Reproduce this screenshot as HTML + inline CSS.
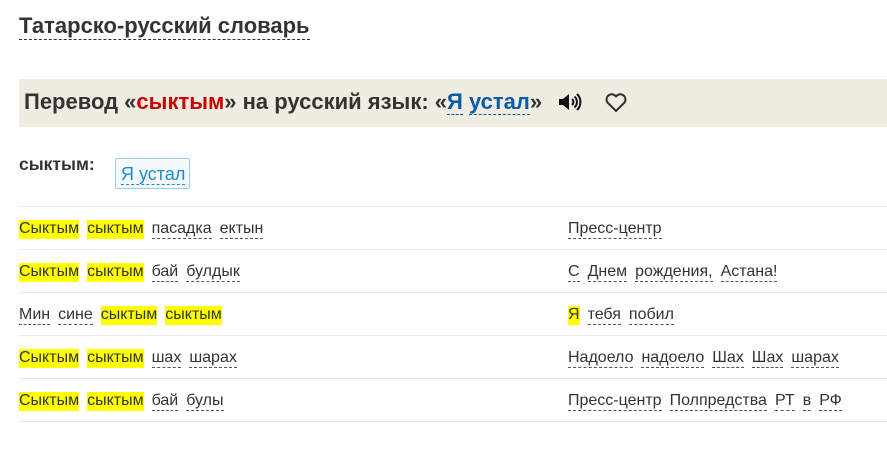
<!DOCTYPE html>
<html><head><meta charset="utf-8"><style>
*{margin:0;padding:0;box-sizing:border-box}
body{width:887px;height:471px;background:#fff;font-family:"Liberation Sans",Arial,sans-serif;color:#333;position:relative;overflow:hidden}
.t{position:absolute;left:19px;top:13px;font-size:22px;font-weight:bold;color:#333;border-bottom:1px dashed #333;line-height:26px}
.band{position:absolute;left:19px;top:79px;width:868px;height:48px;background:#efede2}
.h{position:absolute;left:5px;top:11px;font-size:22px;font-weight:bold;color:#333;white-space:nowrap;line-height:24px}
.h .r{color:#c00}
.h .b{color:#0a5ca8;border-bottom:1px dashed #0a5ca8}
.w{position:absolute;left:19px;top:154px;font-size:17.5px;font-weight:bold;color:#333}
.chip{position:absolute;left:115px;top:158px;width:75px;height:31px;border:1px solid #9ccbe6;background:#f3f9fd;border-radius:2px;padding:5px 0 0 5px;font-size:18px;color:#1d8ad0;line-height:20px}
.chip span{border-bottom:1px dashed #1d8ad0}
.row{position:absolute;left:19px;width:868px;height:43px;border-top:1px solid #eceae2;font-size:16px;line-height:20px}
.row .l,.row .rr{position:absolute;top:12px;white-space:nowrap}
.row .l{left:0}.row .rr{left:549px}
.row span{display:inline-block;margin-right:8px;border-bottom:1px dashed #555;line-height:18px}
.row span.y{background:#ff0;border-bottom:1px solid transparent}
.last{position:absolute;left:19px;top:421px;width:868px;border-top:1px solid #eceae2}
</style></head><body>
<div class="t">Татарско-русский словарь</div>
<div class="band"><div class="h">Перевод «<span class="r">сыктым</span>» на русский язык: «<span class="b">Я</span> <span class="b">устал</span>»</div>
<svg style="position:absolute;left:538px;top:12px" width="26" height="22" viewBox="0 0 26 22"><path d="M2 8h4l6-5v16l-6-5H2z" fill="#111"/><path d="M15 8a4 4 0 0 1 0 6M17.5 5.5a7.5 7.5 0 0 1 0 11M20 3a11 11 0 0 1 0 16" stroke="#111" stroke-width="2" fill="none"/></svg>
<svg style="position:absolute;left:585px;top:14px" width="24" height="20" viewBox="0 0 24 20"><path d="M12 18L3.5 9.5A5 5 0 0 1 12 3.5A5 5 0 0 1 20.5 9.5Z" stroke="#333" stroke-width="2" fill="none" stroke-linejoin="round"/></svg>
</div>
<div class="w">сыктым:</div>
<div class="chip"><span>Я устал</span></div>
<div class="row" style="top:206px"><div class="l"><span class="y">Сыктым</span><span class="y">сыктым</span><span>пасадка</span><span>ектын</span></div><div class="rr"><span>Пресс-центр</span></div></div>
<div class="row" style="top:249px"><div class="l"><span class="y">Сыктым</span><span class="y">сыктым</span><span>бай</span><span>булдык</span></div><div class="rr"><span>С</span><span>Днем</span><span>рождения,</span><span>Астана!</span></div></div>
<div class="row" style="top:292px"><div class="l"><span>Мин</span><span>сине</span><span class="y">сыктым</span><span class="y">сыктым</span></div><div class="rr"><span class="y">Я</span><span>тебя</span><span>побил</span></div></div>
<div class="row" style="top:335px"><div class="l"><span class="y">Сыктым</span><span class="y">сыктым</span><span>шах</span><span>шарах</span></div><div class="rr"><span>Надоело</span><span>надоело</span><span>Шах</span><span>Шах</span><span>шарах</span></div></div>
<div class="row" style="top:378px"><div class="l"><span class="y">Сыктым</span><span class="y">сыктым</span><span>бай</span><span>булы</span></div><div class="rr"><span>Пресс-центр</span><span>Полпредства</span><span>РТ</span><span>в</span><span>РФ</span></div></div>
<div class="last"></div>
</body></html>
